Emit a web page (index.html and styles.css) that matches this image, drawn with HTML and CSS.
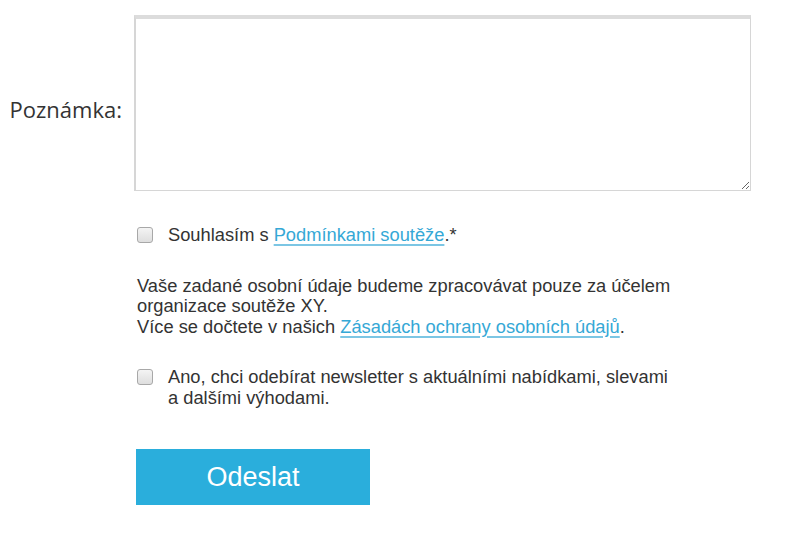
FILE: index.html
```html
<!DOCTYPE html>
<html lang="cs">
<head>
    <meta charset="UTF-8">
    <title>Soutěž XY - formulář</title>
    <link rel="stylesheet" href="styles.css">
</head>
<body>
    <form class="form">
        <div class="row">
            <label class="label" for="note">Poznámka:</label>
            <textarea class="note" id="note"></textarea>
        </div>

        <div class="fields">
            <label class="check">
                <input type="checkbox">
                <span>Souhlasím s <a href="#">Podmínkami soutěže</a>.*</span>
            </label>

            <p class="info">
                Vaše zadané osobní údaje budeme zpracovávat pouze za účelem organizace soutěže XY.<br>
                Více se dočtete v našich <a href="#">Zásadách ochrany osobních údajů</a>.
            </p>

            <label class="check">
                <input type="checkbox">
                <span>Ano, chci odebírat newsletter s aktuálními nabídkami, slevami a dalšími výhodami.</span>
            </label>

            <button type="button" class="submit">Odeslat</button>
        </div>
    </form>
</body>
</html>
```

FILE: styles.css
```css
body {
    margin: 0;
    background: #fff;
    font-family: 'Liberation Sans', Arial, sans-serif;
    color: #333;
}
.form {
    padding-top: 15px;
}
.row {
    display: flex;
    align-items: center;
}
.label {
    width: 122px;
    text-align: right;
    font-family: 'Open Sans', sans-serif;
    font-size: 22px;
    color: #333;
    margin-right: 12px;
    padding-top: 12px;
}
.note {
    width: 617px;
    height: 176px;
    box-sizing: border-box;
    margin: 0;
    border: 1px solid #d6d6d6;
    border-top: 4px solid #dcdcdc;
    border-left-width: 2px;
    background: #fff;
    resize: both;
}
.fields {
    width: 540px;
    margin-left: 137px;
    padding-top: 34px;
    font-size: 18.3px;
    line-height: 20.5px;
}
.check {
    display: flex;
    align-items: flex-start;
    gap: 15px;
}
.check input {
    appearance: none;
    flex: none;
    width: 16px;
    height: 16px;
    margin: 2px 0 0;
    border: 1px solid #a8a8a8;
    border-radius: 3px;
    background: linear-gradient(#f4f4f4, #dedede);
    box-sizing: border-box;
}
a {
    color: #35a8d6;
    text-decoration: underline;
    text-decoration-color: #7cc6e4;
    text-decoration-thickness: 2px;
    text-underline-offset: 3px;
}
.info {
    margin: 30px 0 30px;
    line-height: 20.5px;
}
.submit {
    margin-top: 41px;
    width: 234px;
    height: 56px;
    border: none;
    background: #2aaedc;
    color: #fff;
    font-family: 'Liberation Sans', Arial, sans-serif;
    font-size: 27px;
    margin-left: -1px;
    cursor: pointer;
}
```
